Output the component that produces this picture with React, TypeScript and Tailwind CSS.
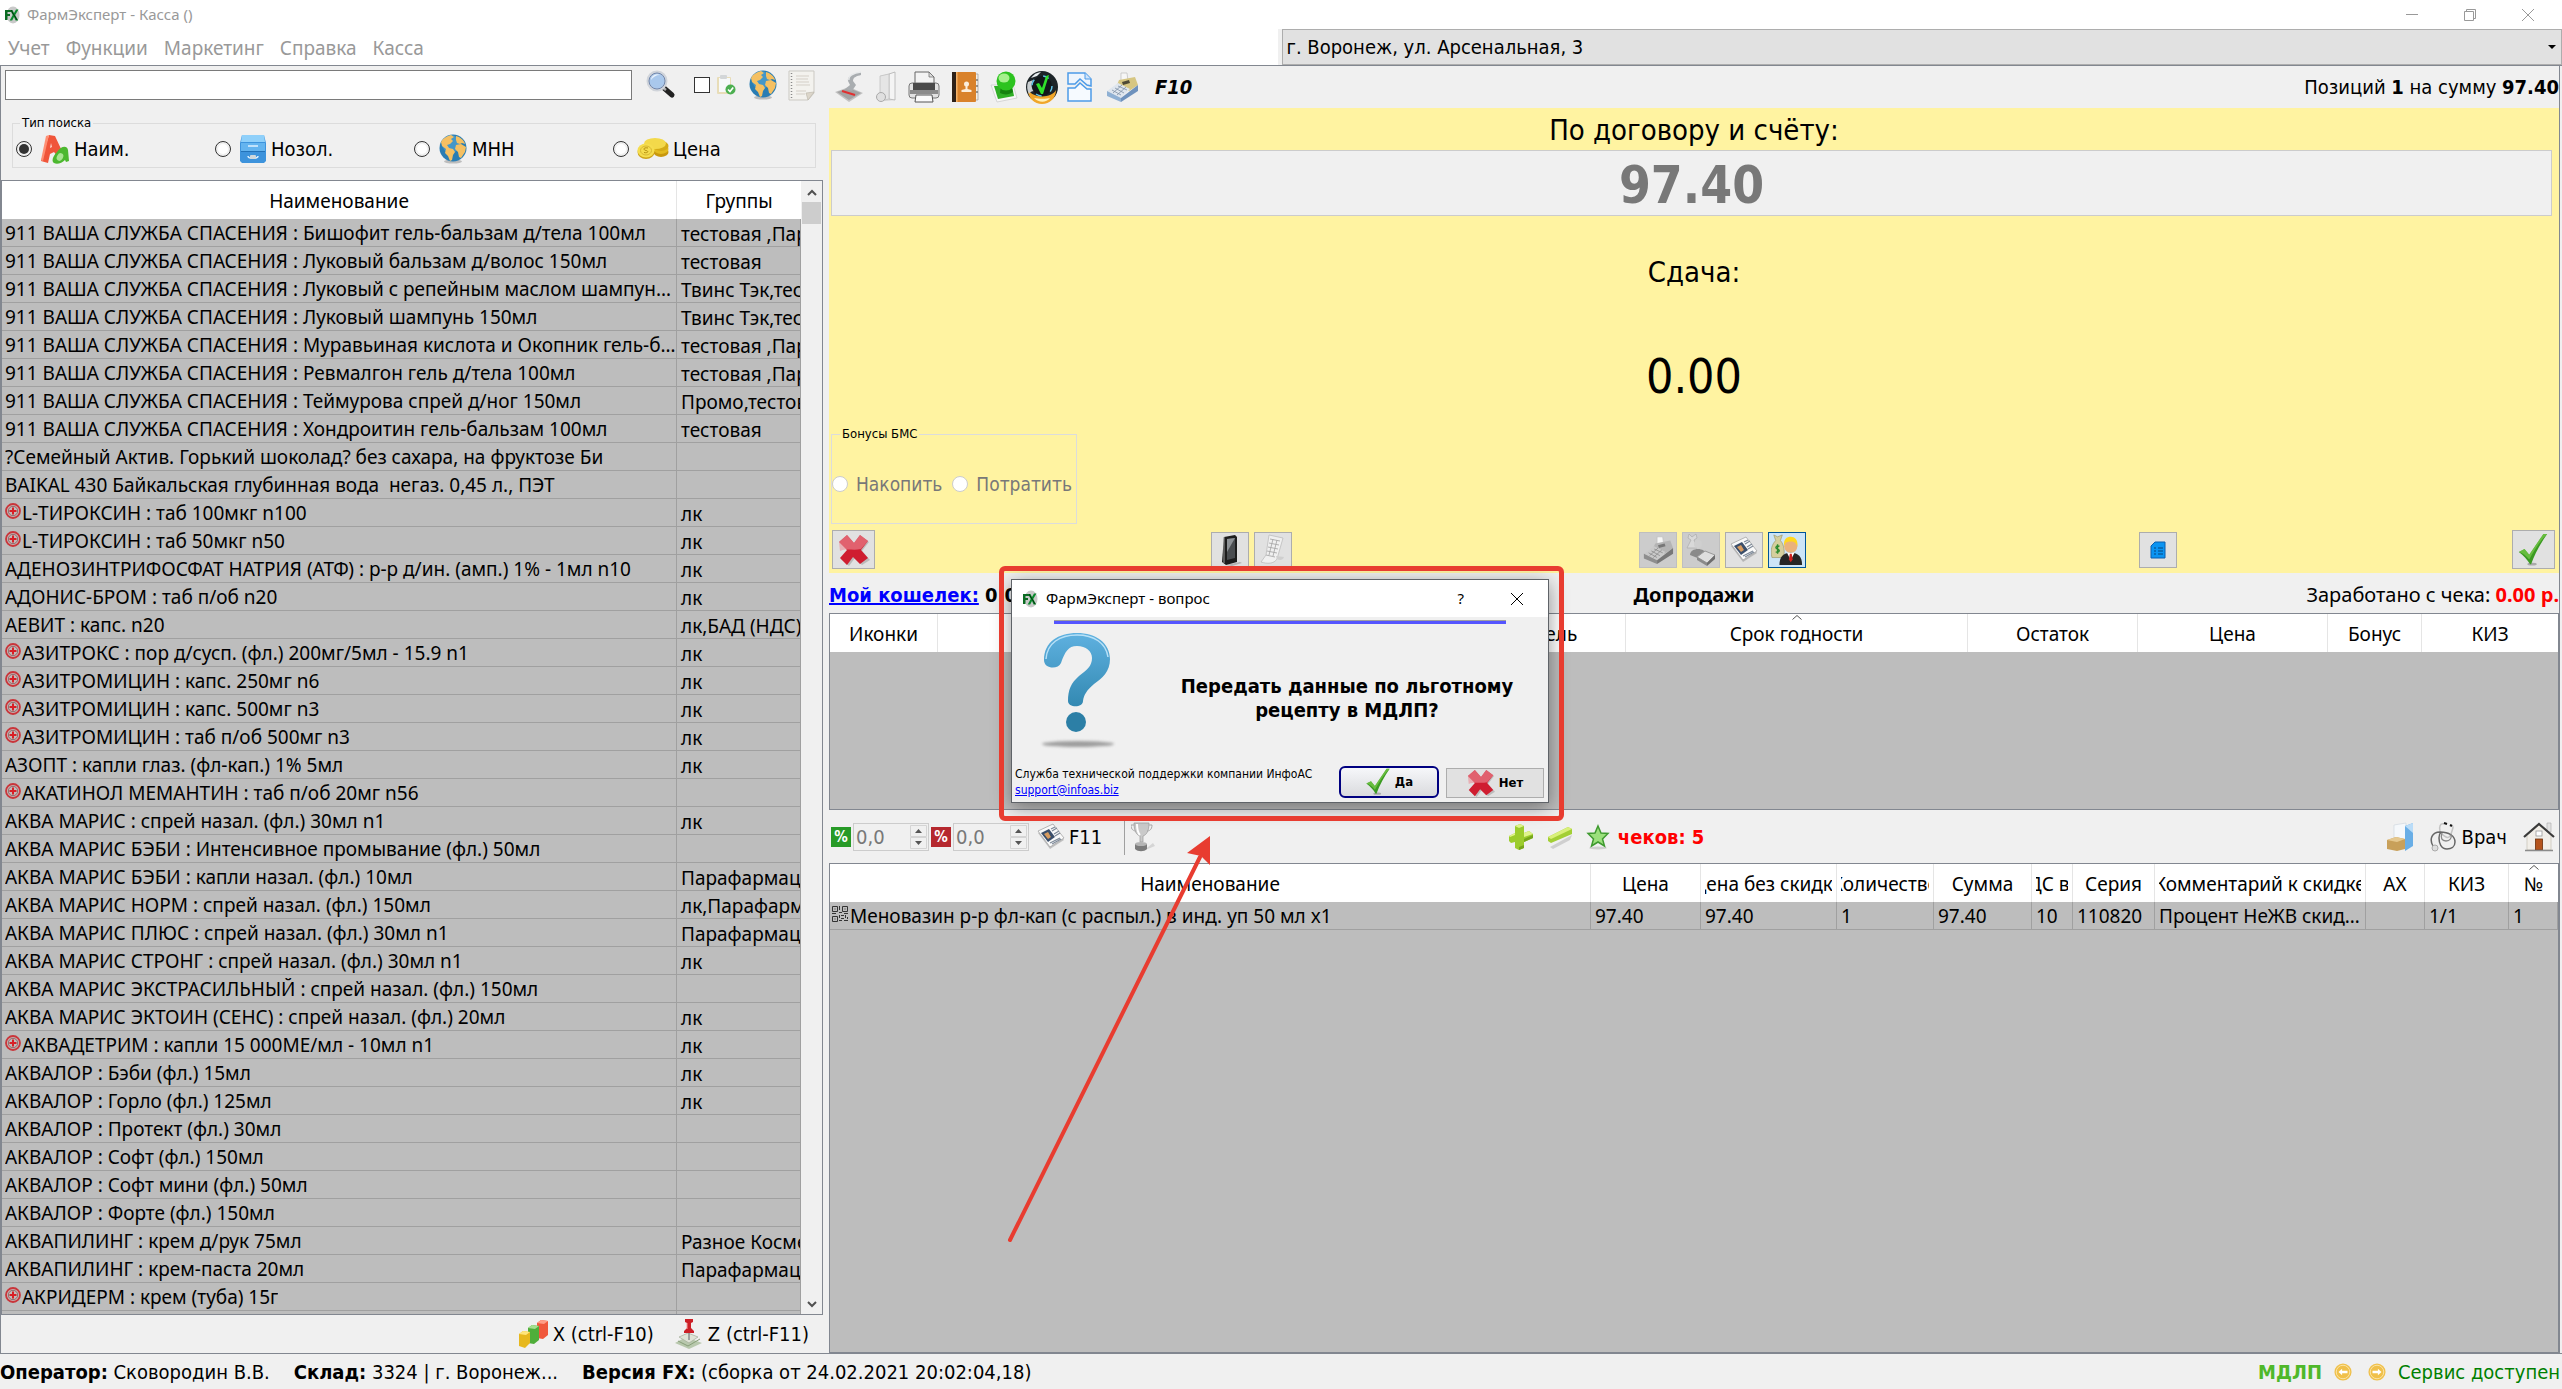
import type { ReactNode } from 'react'

type IconProps = { className?: string }

const products: [string, string, boolean?][] = [
  ['911 ВАША СЛУЖБА СПАСЕНИЯ : Бишофит гель-бальзам д/тела 100мл', 'тестовая ,Парафармация'],
  ['911 ВАША СЛУЖБА СПАСЕНИЯ : Луковый бальзам д/волос 150мл', 'тестовая'],
  ['911 ВАША СЛУЖБА СПАСЕНИЯ : Луковый с репейным маслом шампунь 150мл', 'Твинс Тэк,тестовая'],
  ['911 ВАША СЛУЖБА СПАСЕНИЯ : Луковый шампунь 150мл', 'Твинс Тэк,тестовая'],
  ['911 ВАША СЛУЖБА СПАСЕНИЯ : Муравьиная кислота и Окопник гель-бальзам', 'тестовая ,Парафармация'],
  ['911 ВАША СЛУЖБА СПАСЕНИЯ : Ревмалгон гель д/тела 100мл', 'тестовая ,Парафармация'],
  ['911 ВАША СЛУЖБА СПАСЕНИЯ : Теймурова спрей д/ног 150мл', 'Промо,тестовая'],
  ['911 ВАША СЛУЖБА СПАСЕНИЯ : Хондроитин гель-бальзам 100мл', 'тестовая'],
  ['?Семейный Актив. Горький шоколад? без сахара, на фруктозе Би', ''],
  ['BAIKAL 430 Байкальская глубинная вода  негаз. 0,45 л., ПЭТ', ''],
  ['L-ТИРОКСИН : таб 100мкг n100', 'лк', true],
  ['L-ТИРОКСИН : таб 50мкг n50', 'лк', true],
  ['АДЕНОЗИНТРИФОСФАТ НАТРИЯ (АТФ) : р-р д/ин. (амп.) 1% - 1мл n10', 'лк'],
  ['АДОНИС-БРОМ : таб п/об n20', 'лк'],
  ['АЕВИТ : капс. n20', 'лк,БАД (НДС)'],
  ['АЗИТРОКС : пор д/сусп. (фл.) 200мг/5мл - 15.9 n1', 'лк', true],
  ['АЗИТРОМИЦИН : капс. 250мг n6', 'лк', true],
  ['АЗИТРОМИЦИН : капс. 500мг n3', 'лк', true],
  ['АЗИТРОМИЦИН : таб п/об 500мг n3', 'лк', true],
  ['АЗОПТ : капли глаз. (фл-кап.) 1% 5мл', 'лк'],
  ['АКАТИНОЛ МЕМАНТИН : таб п/об 20мг n56', '', true],
  ['АКВА МАРИС : спрей назал. (фл.) 30мл n1', 'лк'],
  ['АКВА МАРИС БЭБИ : Интенсивное промывание (фл.) 50мл', ''],
  ['АКВА МАРИС БЭБИ : капли назал. (фл.) 10мл', 'Парафармация'],
  ['АКВА МАРИС НОРМ : спрей назал. (фл.) 150мл', 'лк,Парафармация'],
  ['АКВА МАРИС ПЛЮС : спрей назал. (фл.) 30мл n1', 'Парафармация'],
  ['АКВА МАРИС СТРОНГ : спрей назал. (фл.) 30мл n1', 'лк'],
  ['АКВА МАРИС ЭКСТРАСИЛЬНЫЙ : спрей назал. (фл.) 150мл', ''],
  ['АКВА МАРИС ЭКТОИН (СЕНС) : спрей назал. (фл.) 20мл', 'лк'],
  ['АКВАДЕТРИМ : капли 15 000МЕ/мл - 10мл n1', 'лк', true],
  ['АКВАЛОР : Бэби (фл.) 15мл', 'лк'],
  ['АКВАЛОР : Горло (фл.) 125мл', 'лк'],
  ['АКВАЛОР : Протект (фл.) 30мл', ''],
  ['АКВАЛОР : Софт (фл.) 150мл', ''],
  ['АКВАЛОР : Софт мини (фл.) 50мл', ''],
  ['АКВАЛОР : Форте (фл.) 150мл', ''],
  ['АКВАПИЛИНГ : крем д/рук 75мл', 'Разное Косметика'],
  ['АКВАПИЛИНГ : крем-паста 20мл', 'Парафармация'],
  ['АКРИДЕРМ : крем (туба) 15г', '', true],
]

/* ---------- icons ---------- */

function FxLogo({ className }: IconProps) {
  return (
    <svg viewBox="0 0 16 18" className={className}>
      <ellipse cx="9" cy="9" rx="6.500" ry="8.500" fill="#c9c9c9" />
      <path d="M1 4h6v2H3.500v2H6v2H3.500v4H1z" fill="#0b6b22" />
      <path d="M6 4h2.500l1.500 3 2-3.500h2.500L11.200 9l3 5.500h-2.600L10 11l-1.800 3.500H5.700L8.700 9z" fill="#0a8a2c" />
      <path d="M7 4l6 10" stroke="#06330f" strokeWidth="1" />
    </svg>
  )
}

function Magnifier({ className }: IconProps) {
  return (
    <svg viewBox="0 0 30 30" className={className}>
      <path d="M18 18l8 7" stroke="#222" strokeWidth="5" strokeLinecap="round" />
      <path d="M16 17l4 3" stroke="#aaa" strokeWidth="2.500" />
      <circle cx="11" cy="11" r="9" fill="#a9c8ec" stroke="#d0d4da" strokeWidth="3" />
      <circle cx="11" cy="11" r="8" fill="none" stroke="#6f86ad" strokeWidth="1" />
      <path d="M5 10a6 6 0 0 1 9-5c-4 0-7 2-9 5z" fill="#e6f1fc" />
    </svg>
  )
}

function ClipboardOk({ className }: IconProps) {
  return (
    <svg viewBox="0 0 20 22" className={className}>
      <rect x="1" y="3" width="14" height="17" rx="1" fill="#e8ddb8" />
      <rect x="3" y="4" width="11" height="14" fill="#f7f9f9" />
      <rect x="4" y="1" width="7" height="4" rx="1" fill="#d3d6d8" />
      <circle cx="14.500" cy="15.500" r="5" fill="#4caf50" />
      <path d="M12 15.500l2 2 3.200-4" stroke="#fff" strokeWidth="1.600" fill="none" />
    </svg>
  )
}

function Globe({ className }: IconProps) {
  return (
    <svg viewBox="0 0 30 30" className={className}>
      <ellipse cx="15" cy="27.500" rx="9" ry="2" fill="#bdbdbd" />
      <circle cx="15" cy="14" r="13.500" fill="#2a7db3" />
      <circle cx="13" cy="10" r="9" fill="#58a9d6" opacity=".6" />
      <path d="M3 8c2-4 6-6 10-7l3 2-3 2 2 2-3 3-3 1 2 3 4 1 2 3-2 3-1 5-2 1-2-5-3-3 1-4-4-3z" fill="#f5c062" />
      <path d="M18 2c4 1 8 4 9 8l-3-1-2 1-3-1-1-3zM18 11l5-1 5 3-1 5-4 6-2-1-1-5-3-3z" fill="#f5c062" />
    </svg>
  )
}

function Notepad({ className }: IconProps) {
  return (
    <svg viewBox="0 0 27 31" className={className}>
      <path d="M1 1h25v22l-6 7H1z" fill="#f3f2ee" stroke="#cbc9c3" />
      <path d="M26 22l-6 8-2-7z" fill="#dcd6ca" stroke="#b9b4a8" strokeWidth=".6" />
      <path d="M3.500 3v26" stroke="#8a8a8a" strokeWidth="1.500" strokeDasharray="1 2" />
      <path d="M8 6h13M8 9h12M8 12h13M8 15h14M8 21h10M8 24h9" stroke="#d4cfc7" />
    </svg>
  )
}

function Letters({ className }: IconProps) {
  return (
    <svg viewBox="0 0 30 30" className={className}>
      <path d="M9 1l6 1 7 15-4 6-4-5-4 2-2 9-7-2z" fill="#f0553a" />
      <path d="M9 1L3 27l-2-1L6 2z" fill="#ff8f73" />
      <path d="M11 9l1 4-2 1z" fill="#ffd9cf" />
      <path d="M17 18c4-6 10-7 11-2l1 11-3 1-1-2c-3 3-8 5-11 3s-1-7 3-11z" fill="#4cb82f" />
      <ellipse cx="20" cy="23" rx="3" ry="4" fill="#a9e492" transform="rotate(30 20 23)" />
    </svg>
  )
}

function Drawer({ className }: IconProps) {
  return (
    <svg viewBox="0 0 28 30" className={className}>
      <path d="M3 1h22l2 8v18l-2 2H3l-2-2V9z" fill="#3d93dc" />
      <path d="M3 1h22l1 7H2z" fill="#8fd0fa" />
      <path d="M2 9h24v8H2z" fill="#64b4ef" />
      <path d="M9 12h10M9 22c0 3 10 3 10 0" stroke="#dff1ff" strokeWidth="1.500" fill="none" />
      <rect x="11" y="21" width="6" height="4" rx="1" fill="#cfd8dd" />
      <path d="M2 17.500h24" stroke="#2372b8" />
    </svg>
  )
}

function Coins({ className }: IconProps) {
  return (
    <svg viewBox="0 0 32 26" className={className}>
      <ellipse cx="24" cy="16" rx="7.500" ry="5" fill="#c9980d" />
      <ellipse cx="24" cy="13" rx="7.500" ry="5" fill="#e3bb1f" />
      <ellipse cx="24" cy="10" rx="7.500" ry="5" fill="#d4ab15" />
      <ellipse cx="18" cy="7.500" rx="11" ry="5.500" fill="#f3d94a" />
      <ellipse cx="9" cy="16" rx="8.500" ry="7" fill="#cda419" />
      <ellipse cx="9" cy="14.500" rx="8.500" ry="7" fill="#f5dd4e" />
      <ellipse cx="9" cy="14.500" rx="5.500" ry="4.500" fill="none" stroke="#d8b832" />
      <path d="M11 12c-5-1-5 2-2 2.500s2 3-2 2" stroke="#b48f10" fill="none" />
    </svg>
  )
}

function RedCross({ className }: IconProps) {
  return (
    <svg viewBox="0 0 32 32" className={className}>
      <path d="M9 2l7 8 6-8 8 5-7 9 8 9-8 5-7-7-6 8-8-7 7-8-8-8z" fill="#8f8f8f" opacity=".45" transform="translate(1 1)" />
      <path d="M9 1l7 8 6-8 8 6-7 9 7 8-8 6-7-7-6 8-7-7 7-8-8-8z" fill="#cf1d30" />
      <path d="M9 1l7 8 6-8 8 6-7 8C15 17 9 14 2 17l-1-9z" fill="#ec8f97" opacity=".6" />
    </svg>
  )
}

function GreenCheck({ className }: IconProps) {
  return (
    <svg viewBox="0 0 32 36" className={className}>
      <ellipse cx="15" cy="33" rx="5" ry="1.500" fill="#aaa" />
      <path d="M1 20l6-3 5 6L27 1h4C24 11 18 22 14 33h-1C10 28 6 24 1 20z" fill="#3a9a22" />
      <path d="M1 20l6-3 5 6L27 1h4C23 9 17 19 12 28 9 24 5 21 1 20z" fill="#7fd04f" opacity=".65" />
    </svg>
  )
}

function Scanner({ className }: IconProps) {
  return (
    <svg viewBox="0 0 30 32" className={className}>
      <path d="M1 21l14-5 14 6-14 9z" fill="#c2c2c2" />
      <path d="M3 21l12-4 12 5-12 7z" fill="#a3a3a3" />
      <path d="M8 20l13 4" stroke="#e03030" strokeWidth="2" />
      <path d="M27 1c-8 1-14 4-13 9l2 4-5 4 7 2 4-6-3-4c0-4 4-5 8-6z" fill="#a9adb0" />
      <path d="M27 1c-8 1-13 4-12 8" stroke="#e8eaeb" strokeWidth="1.500" fill="none" />
    </svg>
  )
}

function Binder({ className }: IconProps) {
  return (
    <svg viewBox="0 0 22 32" className={className}>
      <path d="M5 5L20 1v28l-8 1H5z" fill="#dadada" />
      <path d="M14 3l6-2v28l-6-1z" fill="#f4f4f4" stroke="#b3b3b3" strokeWidth=".8" />
      <path d="M5 5l9-2v25l-9 2z" fill="#e5e5e5" stroke="#c2c2c2" strokeWidth=".8" />
      <circle cx="6" cy="26" r="4.500" fill="#e0e0e0" stroke="#aaa" />
    </svg>
  )
}

function Printer({ className }: IconProps) {
  return (
    <svg viewBox="0 0 32 32" className={className}>
      <path d="M7 1h14l5 5v9H7z" fill="#f3f3f3" stroke="#666" />
      <path d="M21 1v5h5z" fill="#ddd" stroke="#666" strokeWidth=".7" />
      <rect x="1" y="12" width="30" height="15" rx="3" fill="#e2e2e2" stroke="#777" />
      <path d="M5 12h22v7H5z" fill="#4a4a4a" />
      <path d="M2 19h28v4H2z" fill="#8b8b8b" />
      <path d="M8 24h16l1 7H7z" fill="#fafafa" stroke="#555" />
    </svg>
  )
}

function AddressBook({ className }: IconProps) {
  return (
    <svg viewBox="0 0 28 32" className={className}>
      <path d="M24 3h3v26h-3z" fill="#f3efe6" stroke="#999" strokeWidth=".7" />
      <rect x="1" y="1" width="24" height="30" rx="1" fill="#d9822b" />
      <path d="M1 1h4v30H1z" fill="#2e2118" />
      <path d="M5 1h1.500v30H5z" fill="#f5b36a" />
      <circle cx="15.500" cy="13" r="2.500" fill="#fbeedd" />
      <path d="M14.500 15h2v3l4 1v2h-10v-2l4-1z" fill="#fbeedd" />
      <path d="M25 9h2M25 15h2M25 21h2" stroke="#777" strokeWidth="1.500" />
    </svg>
  )
}

function GreenUser({ className }: IconProps) {
  return (
    <svg viewBox="0 0 28 32" className={className}>
      <path d="M1 14h22l4 13-20 4z" fill="#f7f7f7" stroke="#c9c9c9" strokeWidth=".7" />
      <path d="M4 15h18l2 10-16 3z" fill="#2fae25" />
      <path d="M11 14h10l2 7c-4 3-9 3-13 1z" fill="#15820f" />
      <circle cx="16" cy="10" r="9.500" fill="#2cc31f" />
      <ellipse cx="14" cy="7" rx="5.500" ry="4.500" fill="#a5f08d" />
    </svg>
  )
}

function CheckOrb({ className }: IconProps) {
  return (
    <svg viewBox="0 0 34 34" className={className}>
      <circle cx="17" cy="17" r="16" fill="#1d2428" />
      <path d="M3 20a14 14 0 0 0 28 0c-4 8-22 9-28 0z" fill="#f0a629" />
      <path d="M9 28c5 5 12 5 16 0-3 1-12 1-16 0z" fill="#fff1b8" />
      <path d="M3 12a15 15 0 0 0 1 12c1-2 3-3 5-3-3-3-3-7-1-11z" fill="#c9ced1" />
      <circle cx="17" cy="16" r="10" fill="#11171a" stroke="#5fc3e8" strokeWidth="1.500" strokeDasharray="6 10" />
      <path d="M6 8a14 14 0 0 1 10-6l-4 4z" fill="#e9eef0" />
      <path d="M11 14l3-1 3 5 4-12 3-1-6 19h-2z" fill="#2fe02a" />
    </svg>
  )
}

function TornPage({ className }: IconProps) {
  return (
    <svg viewBox="0 0 28 32" className={className}>
      <path d="M2 2h17l6 6v7l-4-1-7-6-5 5H2z" fill="#eef5fd" stroke="#4c9be8" strokeWidth="1.500" />
      <path d="M19 2v6h6" fill="#cfe4fa" stroke="#4c9be8" />
      <path d="M2 17h7l5-5 7 6h4v12H2z" fill="#f6faff" stroke="#4c9be8" strokeWidth="1.500" />
    </svg>
  )
}

function CashRegister({ className, gray }: IconProps & { gray?: boolean }) {
  const body = gray ? '#8e8e8e' : '#8fb0d3'
  const top = gray ? '#b4b4b4' : '#d6c682'
  return (
    <svg viewBox="0 0 34 30" className={className}>
      <path d="M16 1h6l1 8-7 1z" fill="#f6f6f6" stroke="#bbb" strokeWidth=".7" />
      <path d="M14 8l16-3 3 8-9 6-12-6z" fill={top} />
      <path d="M17 10l7-2 1 3-7 2z" fill={gray ? '#777' : '#4e4a36'} />
      <path d="M2 19l11-8 12 6-9 9z" fill={gray ? '#c9c9c9' : '#dfe6ee'} />
      <path d="M2 19l14 7v4L2 24z" fill={body} />
      <path d="M16 26l17-13v6L16 30z" fill={gray ? '#777' : '#6f92bd'} />
      <path d="M7 18l9 5M10 16l9 5M13 14l9 4M8 21l9-8M12 23l9-8" stroke={gray ? '#888' : '#7f90a5'} strokeWidth=".8" />
    </svg>
  )
}

function Phone({ className }: IconProps) {
  return (
    <svg viewBox="0 0 26 32" className={className}>
      <path d="M9 31l14-3 2 1-10 3z" fill="#b5b5b5" />
      <path d="M7 3l11-2 2 2v25l-11 3-4-3z" fill="#1d1d1d" />
      <path d="M10 5l8-1v20l-8 2z" fill="#4a4d50" />
      <path d="M10 5l8-1-8 14z" fill="#8e9296" />
      <path d="M7 3v26" stroke="#9a9a9a" />
    </svg>
  )
}

function Receipt({ className }: IconProps) {
  return (
    <svg viewBox="0 0 28 32" className={className}>
      <path d="M10 1l14 3-6 21c-3 5-10 5-16 3l5-7z" fill="#f0f0f0" stroke="#bcbcbc" strokeWidth=".8" />
      <path d="M18 25c3 2 6 1 7-2l-8-1z" fill="#cfcfcf" />
      <path d="M11 5l10 2M10 9l10 2M9 13l10 2M8 17l10 2M7 21l9 2M14 5l-4 16M18 6l-4 16" stroke="#a9a9a9" strokeWidth=".9" />
    </svg>
  )
}

function Newspaper({ className }: IconProps) {
  return (
    <svg viewBox="0 0 28 28" className={className}>
      <path d="M1 8L16 1l11 14-14 9z" fill="#8f8f8f" opacity=".5" transform="translate(0 2)" />
      <path d="M1 8L16 1l11 14-14 9z" fill="#fafafa" stroke="#a5a5a5" strokeWidth=".8" />
      <path d="M4 10l8-4 6 8-7 5z" fill="#3b4f6b" />
      <path d="M7 11l4-2 3 5-3 2z" fill="#d79b5f" />
      <path d="M14 6l4-2M15 8l5-3M17 11l5-3M18 13l5-3M13 20l10-5M15 21l9-5" stroke="#7d8998" strokeWidth="1.200" />
    </svg>
  )
}

function RegisterMan({ className }: IconProps) {
  return (
    <svg viewBox="0 0 32 34" className={className}>
      <path d="M4 1l3 3 4-3 1 4-3 2 3 8H2L6 7 3 5z" fill="#d9d9d9" stroke="#aaa" strokeWidth=".7" />
      <circle cx="13" cy="11" r="4" fill="#cfcfcf" />
      <path d="M5 22c0-8 16-8 16 0l-6 4z" fill="#8a8a8a" />
      <path d="M12 24l8-6 10 4-8 8z" fill="#dedede" stroke="#999" />
      <path d="M12 24l10 6v3l-10-6z" fill="#8a8a8a" />
      <path d="M22 30l8-8v4l-8 7z" fill="#6d6d6d" />
    </svg>
  )
}

function MoneyMan({ className }: IconProps) {
  return (
    <svg viewBox="0 0 34 34" className={className}>
      <path d="M3 1l4 2 5-2-2 6c4 4 5 13 3 18H1C-1 17 1 11 5 7z" fill="#d5cf9d" stroke="#9b9566" strokeWidth=".7" />
      <path d="M9 13c-4-1-5 2-2 3s2 4-2 3M7 11v10" stroke="#2e8b2e" strokeWidth="1.500" fill="none" />
      <circle cx="21" cy="13" r="7" fill="#eab27c" />
      <path d="M14 13c-1-8 3-10 7-10s8 3 7 10c-2-4-3-5-7-5s-6 1-7 5z" fill="#ffd71f" />
      <path d="M9 33c0-9 4-13 12-13s12 4 12 13z" fill="#262626" />
      <path d="M17 20l4 8 4-8z" fill="#fff" />
      <path d="M20 21h2l1 6-2 3-2-3z" fill="#d02020" />
    </svg>
  )
}

function BlueDoc({ className }: IconProps) {
  return (
    <svg viewBox="0 0 16 18" className={className}>
      <path d="M5 1h10v16H1V5z" fill="#0b94f2" stroke="#0a5fae" />
      <path d="M4 7h2M4 10h2M4 13h2M8 7h5M8 10h5M8 13h5" stroke="#06467f" />
    </svg>
  )
}

function Bars({ className }: IconProps) {
  return (
    <svg viewBox="0 0 32 30" className={className}>
      <path d="M20 4l4-3 7 1v14l-5 4-6-1z" fill="#f0583c" />
      <path d="M20 4l4-3 7 1-4 3z" fill="#ff9d86" />
      <path d="M11 9l4-3 7 1v14l-5 4-6-1z" fill="#4fae3a" />
      <path d="M11 9l4-3 7 1-4 3z" fill="#a4e08e" />
      <path d="M2 15l4-3 7 1v11l-5 5-6-2z" fill="#e7b81e" />
      <path d="M2 15l4-3 7 1-4 3z" fill="#ffe67b" />
    </svg>
  )
}

function PinMoney({ className }: IconProps) {
  return (
    <svg viewBox="0 0 30 32" className={className}>
      <path d="M1 25l11-6 16 6-13 6z" fill="#b8c8ad" />
      <path d="M5 19l9-4 10 4-9 6z" fill="#dfe3d6" stroke="#a4ae9a" strokeWidth=".7" />
      <path d="M4 23l10 5 12-7" stroke="#879e78" fill="none" />
      <path d="M15 12v10" stroke="#8d8d8d" strokeWidth="1.500" />
      <path d="M11 1h8v3l-2 1v5l3 3v2h-10v-2l3-3V5l-2-1z" fill="#cc2027" />
      <path d="M13 5v6" stroke="#f39a9c" />
    </svg>
  )
}

function Trophy({ className }: IconProps) {
  return (
    <svg viewBox="0 0 26 32" className={className}>
      <path d="M12 30l12-5-2-3z" fill="#d5d5d5" />
      <path d="M3 2h15c0 9-3 12-6 13v6h-3v-6C6 14 3 11 3 2z" fill="#c9c9c9" stroke="#999" strokeWidth=".7" />
      <path d="M6 3c0 6 1 9 3 11" stroke="#fff" strokeWidth="2" fill="none" />
      <path d="M3 4H0c0 5 3 6 5 6M18 4h3c0 5-3 6-5 6" stroke="#aaa" fill="none" />
      <path d="M4 23h12v5c-3 3-9 3-12 0z" fill="#7b7b7b" />
      <ellipse cx="10" cy="23" rx="6" ry="2" fill="#b5b5b5" />
    </svg>
  )
}

function PlusIcon({ className }: IconProps) {
  return (
    <svg viewBox="0 0 26 28" className={className}>
      <path d="M7 3l5-2 4 2v7l5-2 4 3v4l-9 4v6l-5 2-4-2v-6l-4 1-2-2v-5l6-3z" fill="#9ccc2d" />
      <path d="M7 3l5-2 4 2-5 2zM16 10l5-2 4 3-9 3zM1 13l6-3v2l-5 2z" fill="#e0f48c" />
      <path d="M11 27l5-2v-6l9-4v-3l-9 4v6l-5 2z" fill="#76a51b" />
    </svg>
  )
}

function MinusIcon({ className }: IconProps) {
  return (
    <svg viewBox="0 0 26 26" className={className}>
      <path d="M3 23L25 11l-2 5-17 9z" fill="#cfcfcf" />
      <path d="M1 13L21 3l4 2v5L4 19l-3-2z" fill="#a3cf35" />
      <path d="M1 13L21 3l4 2L4 15z" fill="#d9f07b" />
    </svg>
  )
}

function StarIcon({ className }: IconProps) {
  return (
    <svg viewBox="0 0 24 26" className={className}>
      <ellipse cx="12" cy="24" rx="9" ry="1.500" fill="#cfcfcf" />
      <path d="M12 2l3 7 7 .5-5.500 5.500 2 7-6.500-4-6.500 4 2-7L2 9.500 9 9z" fill="#9be07c" stroke="#3f9a30" strokeWidth="1.500" />
    </svg>
  )
}

function FolderBox({ className }: IconProps) {
  return (
    <svg viewBox="0 0 28 30" className={className}>
      <path d="M8 3l12-2v24H8z" fill="#f5f8fb" stroke="#d0d8e0" strokeWidth=".7" />
      <path d="M19 4l8-3v23l-8 5z" fill="#69aee6" />
      <path d="M19 4l8-3v10z" fill="#b9dcf8" />
      <path d="M1 18l9-3 9 2v10l-8 2-10-2z" fill="#c8a05a" />
      <path d="M1 18l9-3 9 2-8 3z" fill="#e5c88f" />
    </svg>
  )
}

function Stethoscope({ className }: IconProps) {
  return (
    <svg viewBox="0 0 26 30" className={className}>
      <path d="M14 2c-4-1-5 3-4 7 1 3 4 5 6 6 4 2 5-3 6-6s2-5-1-6" fill="none" stroke="#c4c4c4" strokeWidth="1.500" />
      <path d="M3 24C-1 17 2 10 10 10c9 0 15 4 15 10 0 5-4 7-8 7-6 0-8-6-8-11 0-3 1-5 2-6" fill="none" stroke="#666" strokeWidth="1.500" />
      <path d="M12 11c-2 5 0 8 4 8s6-3 5-7" fill="none" stroke="#888" strokeWidth="1.300" />
      <path d="M14 1l3 1M20 3l2 1" stroke="#111" strokeWidth="2" />
      <circle cx="5" cy="26" r="3" fill="#ddd" stroke="#aaa" />
    </svg>
  )
}

function House({ className }: IconProps) {
  return (
    <svg viewBox="0 0 32 30" className={className}>
      <path d="M24 1h4v9h-4z" fill="#e3e3e3" stroke="#aaa" strokeWidth=".6" />
      <path d="M4 13L16 3l12 10v15H4z" fill="#f1eee8" stroke="#c4c0b6" strokeWidth=".7" />
      <path d="M1 15L16 2l15 13" fill="none" stroke="#3a3a3a" strokeWidth="2.200" />
      <rect x="12.500" y="17" width="7" height="11" fill="#b5541c" stroke="#6c2e0b" strokeWidth=".8" />
      <rect x="13" y="9" width="6" height="5" fill="#fff" stroke="#999" strokeWidth=".8" />
      <path d="M2 28.500h28" stroke="#8b8b8b" strokeWidth="1.500" />
    </svg>
  )
}

function RxMark({ className }: IconProps) {
  return (
    <svg viewBox="0 0 16 16" className={className}>
      <circle cx="8" cy="8" r="7" fill="#c9b4b4" stroke="#c9353a" strokeWidth="1.800" />
      <circle cx="8" cy="8" r="4.700" fill="#c4b9b9" stroke="#8d6a6a" />
      <path d="M7 4.500h2V7h2.500v2H9v2.500H7V9H4.500V7H7z" fill="#d81f26" />
    </svg>
  )
}

function QrMark({ className }: IconProps) {
  return (
    <svg viewBox="0 0 16 16" className={className} fill="none" stroke="#333">
      <path d="M.5.500h5v5h-5zM10.500.500h5v5h-5zM.5 10.500h5v5h-5zM2.500 3h1M12.500 3h1M2.500 13h1" />
      <path d="M7.500 0v4M7 6.500h3M0 7.500h4M12 7.500h4M7.500 9v3M9 9.500h3M13.500 9v3M9 12.500h3M7 14.500h3M12 14.500h4M15.500 11v2" />
    </svg>
  )
}

function ArrowBadge({ className }: IconProps) {
  return (
    <svg viewBox="0 0 20 20" className={className}>
      <circle cx="10" cy="10" r="9.500" fill="#f0c04a" />
      <circle cx="10" cy="10" r="7.500" fill="none" stroke="#fbe6ae" />
      <path d="M5 10l4-3.500v2h6v3H9v2z" fill="#fff" />
    </svg>
  )
}

function QuestionMark({ className }: IconProps) {
  return (
    <svg viewBox="0 0 76 118" className={className}>
      <defs>
        <linearGradient id="question-fill" x1="0" y1="0" x2="0" y2="1">
          <stop offset="0" stopColor="#5fb1e0" />
          <stop offset="1" stopColor="#3389b2" />
        </linearGradient>
        <filter id="question-shadow" x="-10%" y="-80%" width="120%" height="260%">
          <feGaussianBlur stdDeviation="1.500" />
        </filter>
      </defs>
      <ellipse cx="38" cy="112" rx="36" ry="3" fill="#9d9d9d" filter="url(#question-shadow)" />
      <path
        d="M4 28C4 10 18 1 37 1s33 10 33 26c0 13-8 19-16 25-8 7-10 11-11 17 0 7-15 7-15 0 0-11 3-18 11-25 8-6 13-10 13-18 0-7-6-12-15-12S25 20 21 31C18 38 4 37 4 28z"
        fill="url(#question-fill)"
      />
      <path d="M6 27C7 11 20 3 37 3s29 8 31 22" fill="none" stroke="#b9e1f7" strokeWidth="1.500" />
      <ellipse cx="36" cy="90" rx="10" ry="10" fill="#2c7fa6" />
    </svg>
  )
}

/* ---------- small parts ---------- */

type ToolButtonProps = { label: string; children: ReactNode; tone?: string; size?: string }

function ToolButton({ label, children, tone = 'border-[#adadad] bg-[#e1e1e1]', size = 'h-9 w-[38px]' }: ToolButtonProps) {
  return (
    <button type="button" aria-label={label} className={`flex items-center justify-center border ${size} ${tone}`}>
      {children}
    </button>
  )
}

function SearchType({ icon, text, checked }: { icon: ReactNode; text: string; checked?: boolean }) {
  return (
    <label className="flex w-[199px] items-center">
      <input
        type="radio"
        name="search-type"
        defaultChecked={checked}
        className="mr-2 size-4 appearance-none rounded-full border border-[#333] bg-white bg-clip-content p-[2px] checked:bg-[#333]"
      />
      {icon}
      <span className="ml-1">{text}</span>
    </label>
  )
}

function BonusType({ text }: { text: string }) {
  return (
    <label className="flex items-center gap-2 text-[#787878]">
      <input type="radio" name="bonus" disabled className="size-4 appearance-none rounded-full border border-[#cccccc] bg-white" />
      {text}
    </label>
  )
}

function Discount({ label, badge }: { label: string; badge: string }) {
  return (
    <div className="flex items-center gap-[2px]">
      <span className={`flex h-5 w-5 items-center justify-center text-[15px] font-bold text-white ${badge}`}>%</span>
      <div className="flex h-7 w-[76px] items-center border border-[#cccccc]">
        <input
          aria-label={label}
          defaultValue="0,0"
          disabled
          className="w-full min-w-0 bg-transparent pl-[2px] text-[20px] text-[#787878]"
        />
        <svg viewBox="0 0 18 26" className="h-[26px] w-[18px] shrink-0">
          <path d="M.5 1.500h16v11H.5zM.5 13.500h16v11H.5z" fill="#f0f0f0" stroke="#d4d4d4" />
          <path d="M5 9l3.500-4L12 9zM5 17l3.500 4L12 17z" fill="#555" />
        </svg>
      </div>
    </div>
  )
}

function Th({ children, sorted }: { children?: ReactNode; sorted?: boolean }) {
  return (
    <th className="relative border-r border-[#e5e5e5] bg-white p-0 px-1 pt-[3px] font-normal last:border-r-0">
      {sorted && (
        <svg viewBox="0 0 10 5" className="absolute top-px left-1/2 h-[5px] w-[10px] -translate-x-1/2">
          <path d="M.5 4.500L5 .5l4.500 4" fill="none" stroke="#555" />
        </svg>
      )}
      <span className="flex justify-center overflow-hidden whitespace-nowrap">{children}</span>
    </th>
  )
}

/* ---------- page sections ---------- */

function Header() {
  return (
    <header className="bg-white font-['Noto_Sans',sans-serif] text-[#999]">
      <div className="flex h-[29px] items-center pl-1 text-[15px]">
        <FxLogo className="h-[18px] w-4" />
        <span className="ml-[7px]">ФармЭксперт - Касса ()</span>
        <div className="ml-auto flex gap-[44px] pr-[27px]">
          <button type="button" aria-label="Свернуть">
            <svg viewBox="0 0 14 14" className="size-[14px]"><path d="M1 6.500h12" stroke="#999" /></svg>
          </button>
          <button type="button" aria-label="Развернуть">
            <svg viewBox="0 0 14 14" className="size-[14px]" fill="none" stroke="#999"><path d="M1.500 3.500h9v9h-9zM3.500 3.500v-2h9v9h-2" /></svg>
          </button>
          <button type="button" aria-label="Закрыть">
            <svg viewBox="0 0 14 14" className="size-[14px]"><path d="M1 1l12 12M13 1L1 13" stroke="#999" /></svg>
          </button>
        </div>
      </div>
      <div className="flex h-9 items-center">
        <nav className="flex flex-1 gap-4 pt-[2px] pl-2 text-[19px]">
          <button type="button">Учет</button>
          <button type="button">Функции</button>
          <button type="button">Маркетинг</button>
          <button type="button">Справка</button>
          <button type="button">Касса</button>
        </nav>
        <div className="relative h-full w-[50.1%] border-l-4 border-[#f0f0f0]">
          <select
            aria-label="Адрес"
            className="h-full w-full appearance-none border border-[#adadad] bg-[#e1e1e1] pl-[3px] font-['DejaVu_Sans_Condensed',sans-serif] text-[20px] text-black"
          >
            <option>г. Воронеж, ул. Арсенальная, 3</option>
          </select>
          <svg viewBox="0 0 8 4" className="pointer-events-none absolute top-4 right-[6px] h-1 w-2"><path d="M0 0h8L4 4z" /></svg>
        </div>
      </div>
    </header>
  )
}

function ProductPanel() {
  return (
    <section className="flex w-[829px] shrink-0 flex-col border-l border-[#828790]">
      <div className="flex h-[38px] items-center pl-1">
        <input aria-label="Поиск" className="h-[30px] w-[627px] border border-[#7a7a7a] bg-white px-1" />
        <button type="button" aria-label="Найти" className="ml-[14px]"><Magnifier className="size-[30px]" /></button>
        <label className="ml-[18px] flex items-center gap-[6px]">
          <input type="checkbox" aria-label="Только в наличии" className="size-4 appearance-none border border-[#333] bg-white" />
          <ClipboardOk className="h-[22px] w-5" />
        </label>
        <button type="button" aria-label="Интернет" className="ml-3"><Globe className="size-[30px]" /></button>
        <button type="button" aria-label="Блокнот" className="ml-[10px]"><Notepad className="h-[31px] w-[27px]" /></button>
      </div>

      <fieldset className="mt-[11px] mr-4 mb-3 ml-[11px] h-[53px] border border-[#dcdcdc] px-[3px] text-[20px]">
        <legend className="ml-1 px-[2px] text-[13px] leading-4">Тип поиска</legend>
        <div className="flex pt-[3px]">
          <SearchType checked text="Наим." icon={<Letters className="size-[30px]" />} />
          <SearchType text="Нозол." icon={<Drawer className="h-[30px] w-7" />} />
          <SearchType text="МНН" icon={<Globe className="size-[30px]" />} />
          <SearchType text="Цена" icon={<Coins className="h-[26px] w-8" />} />
        </div>
      </fieldset>

      <div className="mr-[6px] flex h-[1135px] overflow-hidden border border-[#828790] font-['Noto_Sans',sans-serif] text-[19px]">
        <div className="flex-1 bg-[#bdbdbd]">
          <table className="w-full table-fixed border-separate border-spacing-0">
            <colgroup>
              <col />
              <col className="w-[124px]" />
            </colgroup>
            <thead>
              <tr className="h-[38px]">
                <Th>Наименование</Th>
                <Th>Группы</Th>
              </tr>
            </thead>
            <tbody>
              {products.map(([name, group, rx]) => (
                <tr key={name}>
                  <td className="h-7 border-r border-b border-[#a0a0a0] p-0 pl-[3px]">
                    <div className="flex gap-px">
                      {rx && <RxMark className="mt-1 size-4 shrink-0" />}
                      <span className="truncate pt-[2px] leading-[25px] whitespace-pre">{name}</span>
                    </div>
                  </td>
                  <td className="h-7 overflow-hidden border-r border-b border-[#a0a0a0] p-0 pt-1 pl-1 leading-[23px] whitespace-nowrap">{group}</td>
                </tr>
              ))}
              <tr>
                <td className="h-1 border-r border-[#a0a0a0] p-0" />
                <td className="h-1 border-r border-[#a0a0a0] p-0" />
              </tr>
            </tbody>
          </table>
        </div>
        <div className="flex w-[21px] flex-col items-center bg-[#f0f0f0] py-[6px]">
          <svg viewBox="0 0 10 7" className="mt-[2px] h-[7px] w-[10px]"><path d="M1 6l4-4 4 4" fill="none" stroke="#505050" strokeWidth="2" /></svg>
          <div className="mt-[6px] h-[22px] w-[19px] bg-[#cdcdcd]" />
          <svg viewBox="0 0 10 7" className="mt-auto h-[7px] w-[10px]"><path d="M1 1l4 4 4-4" fill="none" stroke="#505050" strokeWidth="2" /></svg>
        </div>
      </div>

      <div className="flex h-[38px] items-center justify-end gap-5 pr-5 text-[20px]">
        <button type="button" className="flex items-center gap-1"><Bars className="h-[30px] w-8" />X (ctrl-F10)</button>
        <button type="button" className="flex items-center gap-1"><PinMoney className="h-8 w-[30px]" />Z (ctrl-F11)</button>
      </div>
    </section>
  )
}

function Toolbar() {
  return (
    <div className="flex h-[42px] shrink-0 items-center pl-[5px] text-[20px]">
      <div className="flex items-center gap-[11px]">
        <button type="button" aria-label="Сканер"><Scanner className="h-8 w-[30px]" /></button>
        <button type="button" aria-label="Папка"><Binder className="h-8 w-[22px]" /></button>
        <button type="button" aria-label="Печать"><Printer className="size-8" /></button>
        <button type="button" aria-label="Контакты"><AddressBook className="h-8 w-7" /></button>
        <button type="button" aria-label="Клиент"><GreenUser className="h-8 w-7" /></button>
        <button type="button" aria-label="Проверка" className="-mx-1"><CheckOrb className="size-[34px]" /></button>
        <button type="button" aria-label="Возврат"><TornPage className="h-8 w-7" /></button>
        <button type="button" className="flex items-center gap-4 font-bold italic"><CashRegister className="h-[30px] w-[34px]" />F10</button>
      </div>
      <p className="ml-auto">Позиций <b>1</b> на сумму <b>97.40</b></p>
    </div>
  )
}

function PaymentPanel() {
  return (
    <div className="flex h-[465px] shrink-0 flex-col bg-[#fff3a1]">
      <label htmlFor="total" className="flex h-[42px] items-center justify-center pt-1 text-[29px]">По договору и счёту:</label>
      <input
        id="total"
        readOnly
        value="97.40"
        className="mr-[7px] ml-[2px] h-[66px] border border-[#cccccc] bg-[#f0f0f0] pt-[6px] text-center text-[51px] font-bold text-[#787878]"
      />
      <p className="mt-[38px] text-center text-[29px] leading-9">Сдача:</p>
      <p className="mt-[54px] text-center text-[48px] leading-[64px]">0.00</p>
      <div className="mt-[18px] px-[2px]">
        <fieldset className="h-[98px] w-[246px] border border-[#dcdcdc] text-[19px]">
          <legend className="ml-2 px-[2px] text-[13px] leading-4">Бонусы БМС</legend>
          <div className="flex justify-between pt-7 pr-1">
            <BonusType text="Накопить" />
            <BonusType text="Потратить" />
          </div>
        </fieldset>
      </div>
      <div className="mt-auto grid grid-cols-[379fr_428fr_501fr_416fr] items-center pr-1 pb-1 pl-[3px]">
        <ToolButton label="Отмена" size="h-[39px] w-[43px]"><RedCross className="size-8" /></ToolButton>
        <div className="flex gap-[5px]">
          <ToolButton label="Телефон"><Phone className="h-8 w-[26px]" /></ToolButton>
          <ToolButton label="Чек"><Receipt className="h-8 w-7" /></ToolButton>
        </div>
        <div className="flex gap-[5px]">
          <ToolButton label="Касса" tone="border-[#bfbfbf] bg-[#cccccc]"><CashRegister gray className="h-[30px] w-8" /></ToolButton>
          <ToolButton label="Касса и клиент" tone="border-[#bfbfbf] bg-[#cccccc]"><RegisterMan className="h-[34px] w-8" /></ToolButton>
          <ToolButton label="Рецепт"><Newspaper className="size-7" /></ToolButton>
          <ToolButton label="Скидка клиента" tone="border-[#005499] bg-[#cce4f7]"><MoneyMan className="size-8" /></ToolButton>
        </div>
        <div className="flex items-center justify-between">
          <ToolButton label="Документ"><BlueDoc className="h-[18px] w-4" /></ToolButton>
          <ToolButton label="Оплатить" size="h-[39px] w-[43px]"><GreenCheck className="h-[34px] w-8" /></ToolButton>
        </div>
      </div>
    </div>
  )
}

function UpsellPanel() {
  return (
    <>
      <div className="flex h-10 shrink-0 items-center justify-between pt-1 text-[20px]">
        <p className="flex-1 font-bold"><a href="#wallet" className="text-[#0000ff] underline">Мой кошелек:</a> 0.00</p>
        <p className="font-['Noto_Sans',sans-serif] font-bold">Допродажи</p>
        <p className="flex-1 text-right font-['Noto_Sans',sans-serif]">Заработано с чека: <b className="text-[#ff0000]">0.00 р.</b></p>
      </div>
      <div className="h-[197px] shrink-0 border border-[#828790] bg-[#bdbdbd] font-['Noto_Sans',sans-serif] text-[19px]">
        <table className="w-full table-fixed border-separate border-spacing-0">
          <colgroup>
            <col className="w-[108px]" />
            <col className="w-[448px]" />
            <col className="w-[240px]" />
            <col />
            <col className="w-[170px]" />
            <col className="w-[190px]" />
            <col className="w-[94px]" />
            <col className="w-[136px]" />
          </colgroup>
          <thead>
            <tr className="h-[38px]">
              <Th>Иконки</Th>
              <Th>Наименование</Th>
              <Th>Производитель</Th>
              <Th sorted>Срок годности</Th>
              <Th>Остаток</Th>
              <Th>Цена</Th>
              <Th>Бонус</Th>
              <Th>КИЗ</Th>
            </tr>
          </thead>
        </table>
      </div>
    </>
  )
}

function ReceiptToolbar() {
  return (
    <div className="flex h-[53px] shrink-0 items-center pt-px pr-1 pl-[2px] text-[20px]">
      <Discount label="Скидка" badge="bg-[#279a27]" />
      <div className="ml-[2px]"><Discount label="Наценка" badge="bg-[#b5282e]" /></div>
      <button type="button" className="ml-2 flex items-center gap-1"><Newspaper className="size-7" />F11</button>
      <div className="ml-[22px] h-9 w-px bg-[#a0a0a0]" />
      <button type="button" aria-label="Акции" className="ml-[6px]"><Trophy className="h-8 w-[26px]" /></button>
      <div className="flex-[350]" />
      <div className="flex items-center gap-[13px]">
        <button type="button" aria-label="Добавить"><PlusIcon className="h-7 w-[26px]" /></button>
        <button type="button" aria-label="Убрать"><MinusIcon className="size-[26px]" /></button>
        <button type="button" className="flex items-center gap-2 font-bold text-[#ff0000]"><StarIcon className="h-[26px] w-6" />чеков: 5</button>
      </div>
      <div className="flex-[680]" />
      <div className="flex items-center gap-4">
        <button type="button" aria-label="Склад"><FolderBox className="h-[30px] w-7" /></button>
        <button type="button" className="flex items-center gap-[6px]"><Stethoscope className="h-[30px] w-[26px]" />Врач</button>
        <button type="button" aria-label="Домой"><House className="h-[30px] w-8" /></button>
      </div>
    </div>
  )
}

const receiptRow = ['97.40', '97.40', '1', '97.40', '10', '110820', 'Процент НеЖВ скидки', '', '1/1', '1']

function ReceiptTable() {
  return (
    <div className="flex-1 border border-[#828790] bg-[#bdbdbd] font-['Noto_Sans',sans-serif] text-[19px]">
      <table className="w-full table-fixed border-separate border-spacing-0">
        <colgroup>
          <col />
          <col className="w-[110px]" />
          <col className="w-[136px]" />
          <col className="w-[97px]" />
          <col className="w-[98px]" />
          <col className="w-[41px]" />
          <col className="w-[82px]" />
          <col className="w-[211px]" />
          <col className="w-[59px]" />
          <col className="w-[84px]" />
          <col className="w-[49px]" />
        </colgroup>
        <thead>
          <tr className="h-[38px]">
            <Th>Наименование</Th>
            <Th>Цена</Th>
            <Th>Цена без скидки</Th>
            <Th>Количество</Th>
            <Th>Сумма</Th>
            <Th>НДС в %</Th>
            <Th>Серия</Th>
            <Th>Комментарий к скидке</Th>
            <Th>АХ</Th>
            <Th>КИЗ</Th>
            <Th sorted>№</Th>
          </tr>
        </thead>
        <tbody>
          <tr>
            <td className="h-7 border-r border-b border-[#a0a0a0] p-0 pl-[2px]">
              <div className="flex gap-[2px]">
                <QrMark className="mt-1 size-4" />
                <span className="pt-[2px] leading-[25px]">Меновазин р-р фл-кап (с распыл.) в инд. уп 50 мл x1</span>
              </div>
            </td>
            {receiptRow.map((cell, i) => (
              <td key={i} className="h-7 truncate border-r border-b border-[#a0a0a0] p-0 pt-[2px] pl-1 leading-[25px]">{cell}</td>
            ))}
          </tr>
        </tbody>
      </table>
    </div>
  )
}

function QuestionDialog() {
  return (
    <div
      role="dialog"
      aria-label="ФармЭксперт - вопрос"
      className="absolute top-[513px] left-[1011px] flex h-[224px] w-[538px] flex-col border border-[#5f6368] bg-[#f0f0f0] shadow-[0_4px_18px_rgba(0,0,0,0.4)]"
    >
      <div className="flex h-[37px] shrink-0 items-center bg-white pr-6 pl-[10px] font-['Noto_Sans',sans-serif] text-[15px]">
        <FxLogo className="h-[18px] w-4" />
        <span className="ml-2">ФармЭксперт - вопрос</span>
        <button type="button" aria-label="Справка" className="ml-auto">?</button>
        <button type="button" aria-label="Закрыть" className="ml-[46px]">
          <svg viewBox="0 0 14 14" className="size-[14px]"><path d="M1 1l12 12M13 1L1 13" stroke="#000" /></svg>
        </button>
      </div>
      <div className="mx-[42px] mt-[3px] h-1 shrink-0 border-t border-[#a0a0a0] bg-[#5555ff]" />
      <div className="flex flex-1 pl-7">
        <QuestionMark className="mt-2 h-[118px] w-[76px]" />
        <p className="mt-[50px] flex-1 pl-[30px] text-center text-[20px] leading-6 font-bold">
          Передать данные по льготному
          <br />
          рецепту в МДЛП?
        </p>
      </div>
      <div className="flex shrink-0 items-end gap-[7px] pr-1 pb-1 pl-[3px]">
        <div className="flex-1 text-[12px] leading-4 whitespace-nowrap">
          <p>Служба технической поддержки компании ИнфоАС</p>
          <a href="mailto:support@infoas.biz" className="text-[#0000ff] underline">support@infoas.biz</a>
        </div>
        <button type="button" className="flex h-8 w-[100px] shrink-0 items-center justify-center gap-1 rounded-md border-2 border-[#000080] bg-gradient-to-b from-[#f6f7fa] to-[#dadbde] text-[13px] font-bold">
          <GreenCheck className="h-7 w-[26px]" />Да
        </button>
        <button type="button" className="flex h-[30px] w-[98px] shrink-0 items-center justify-center gap-1 border border-[#adadad] bg-[#e1e1e1] text-[13px] font-bold">
          <RedCross className="size-7" />Нет
        </button>
      </div>
    </div>
  )
}

function Annotation() {
  return (
    <>
      <div className="pointer-events-none absolute top-[500px] left-[999px] h-[255px] w-[565px] rounded-md border-[5px] border-[#e83c30]" />
      <svg viewBox="0 0 210 410" className="pointer-events-none absolute top-[769px] left-[1005px] h-[410px] w-[210px]">
        <path d="M5 405L195 22" stroke="#e83c30" strokeWidth="4" strokeLinecap="round" />
        <path d="M205 1v29l-9-9-14-3z" fill="#e83c30" />
      </svg>
    </>
  )
}

function StatusBar() {
  return (
    <footer className="flex h-9 items-center gap-6 border-t border-[#828790] pr-[2px] text-[20px]">
      <p><b>Оператор:</b> Сковородин В.В.</p>
      <p><b>Склад:</b> 3324 | г. Воронеж...</p>
      <p><b>Версия FX:</b> (сборка от 24.02.2021 20:02:04,18)</p>
      <div className="ml-auto flex items-center gap-3">
        <b className="text-[#4fb82a]">МДЛП</b>
        <div className="flex gap-4">
          <ArrowBadge className="size-[18px]" />
          <ArrowBadge className="size-[18px] rotate-180" />
        </div>
        <span className="text-[#008000]">Сервис доступен</span>
      </div>
    </footer>
  )
}

export default function App() {
  return (
    <div className="flex min-h-screen flex-col bg-[#f0f0f0] font-['DejaVu_Sans_Condensed',sans-serif] text-black">
      <Header />
      <main className="relative flex flex-1 border-t border-[#828790]">
        <ProductPanel />
        <section className="mr-[2px] flex min-w-0 flex-1 flex-col border-r border-[#828790]">
          <Toolbar />
          <PaymentPanel />
          <UpsellPanel />
          <ReceiptToolbar />
          <ReceiptTable />
        </section>
        <QuestionDialog />
        <Annotation />
      </main>
      <StatusBar />
    </div>
  )
}
